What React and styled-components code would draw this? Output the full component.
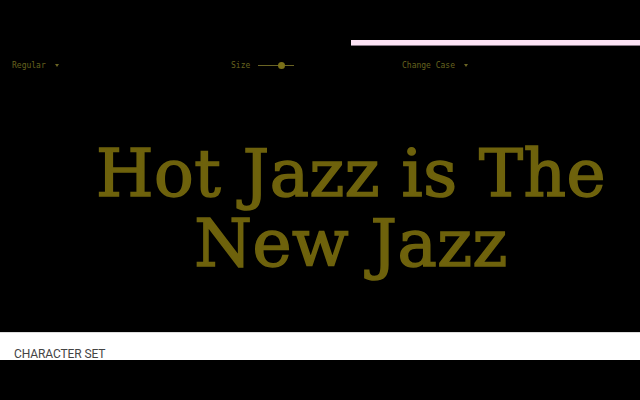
import React from "react";
import styled, { createGlobalStyle } from "styled-components";

const Global = createGlobalStyle`
  html, body { margin: 0; padding: 0; background: #000; }
  body { width: 640px; height: 400px; overflow: hidden; }
`;

const Page = styled.div`
  width: 640px;
  height: 400px;
  background: #000;
  display: flex;
  flex-direction: column;
`;

const TopBar = styled.div`
  padding-top: 40px;
  display: flex;
  justify-content: flex-end;
`;

const Progress = styled.div`
  width: 289px;
  height: 5px;
  background: #fde3f5;
  box-shadow: 0 1px 0 #8a7a88;
`;

const Controls = styled.div`
  display: grid;
  grid-template-columns: 219px 171px 1fr;
  padding: 9px 0 0 12px;
  height: 22px;
  align-items: center;
`;

const Control = styled.div`
  display: flex;
  align-items: center;
  gap: ${(p) => p.$gap || 6}px;
  font-family: "DejaVu Sans Mono", monospace;
  font-size: 8px;
  color: #67631f;
`;

const Caret = styled.span`
  width: 0;
  height: 0;
  border-left: 2.5px solid transparent;
  border-right: 2.5px solid transparent;
  border-top: 3px solid #6a6424;
  margin-left: 3px;
`;

const Track = styled.div`
  position: relative;
  width: 36px;
  height: 1px;
  background: #6a6424;
`;

const Thumb = styled.div`
  position: absolute;
  left: 20px;
  top: -3px;
  width: 7px;
  height: 7px;
  border-radius: 50%;
  background: #7a7018;
`;

const Stage = styled.div`
  flex: 1;
  display: flex;
  align-items: flex-start;
  justify-content: center;
  padding-left: 62px;
  padding-top: 63px;
`;

const Headline = styled.h1`
  margin: 0;
  font-family: "DejaVu Serif", serif;
  font-weight: normal;
  font-size: 66px;
  line-height: 70px;
  color: #6e620c;
  -webkit-text-stroke: 1.6px #6e620c;
  letter-spacing: 0.5px;
  text-align: center;
  white-space: nowrap;
`;

const Band = styled.div`
  height: 28px;
  background: #fff;
  border-top: 1px solid #ddd;
  box-sizing: border-box;
  padding: 15px 0 0 14px;
  overflow: hidden;
  margin-bottom: 40px;
`;

const BandTitle = styled.div`
  font-family: "Roboto", sans-serif;
  font-size: 12px;
  line-height: 12px;
  letter-spacing: -0.1px;
  color: #444;
`;

export default function App() {
  return (
    <>
      <Global />
      <Page>
        <TopBar>
          <Progress />
        </TopBar>
        <Controls>
          <Control>
            Regular <Caret />
          </Control>
          <Control $gap={8}>
            Size
            <Track>
              <Thumb />
            </Track>
          </Control>
          <Control>
            Change Case <Caret />
          </Control>
        </Controls>
        <Stage>
          <Headline>
            Hot Jazz is The
            <br />
            New Jazz
          </Headline>
        </Stage>
        <Band>
          <BandTitle>CHARACTER SET</BandTitle>
        </Band>
      </Page>
    </>
  );
}
